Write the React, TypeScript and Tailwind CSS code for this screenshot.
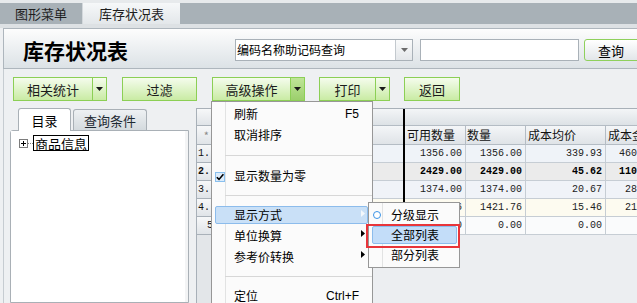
import React from "react";

const cjk = "font-['Noto_Sans_CJK_SC','Noto_Sans',sans-serif]";
const mono = "font-['Liberation_Mono','DejaVu_Sans_Mono',monospace]";

function DownArrow({ color = "#1a1a1a" }: { color?: string }) {
  return (
    <svg width="7" height="4" viewBox="0 0 7 4">
      <path d="M0 0H7L3.5 4Z" fill={color} />
    </svg>
  );
}

function RightArrow({ color = "#000" }: { color?: string }) {
  return (
    <svg width="4" height="7" viewBox="0 0 4 7">
      <path d="M0 0L4 3.5L0 7Z" fill={color} />
    </svg>
  );
}

function ToolButton({
  label,
  width,
  arrow,
  pressed,
}: {
  label: string;
  width: string;
  arrow?: boolean;
  pressed?: boolean;
}) {
  return (
    <div
      className={`flex h-[24px] shrink-0 ${width} border border-[#8ccf55] bg-linear-to-b from-[#f5fced] to-[#c9eba3] text-[13px] leading-none text-[#1b1b1b]`}
    >
      <div className="flex flex-1 items-center justify-center">{label}</div>
      {arrow && (
        <div
          className={`flex w-[14px] items-center justify-center border-l border-[#8ccf55] ${
            pressed ? "bg-linear-to-b from-[#bfe598] to-[#9ccf6c]" : ""
          }`}
        >
          <DownArrow />
        </div>
      )}
    </div>
  );
}

type Row = { bg: string; n: string; pad: string; v: string[]; bold?: boolean };

const rows: Row[] = [
  { bg: "bg-[#eff3f8]", n: "1.", pad: "pl-[1px]", v: ["1356.00", "1356.00", "339.93", "460945.08"] },
  { bg: "bg-[#ebebeb]", n: "2.", pad: "pl-[1px]", v: ["2429.00", "2429.00", "45.62", "110810.98"], bold: true },
  { bg: "bg-[#f0f3f8]", n: "3.", pad: "pl-[1px]", v: ["1374.00", "1374.00", "20.67", "28400.58"] },
  { bg: "bg-[#fdfbf0]", n: "4.", pad: "pl-[1px]", v: ["1421.76", "1421.76", "15.46", "21980.41"] },
  { bg: "bg-[#fafbfc]", n: "5", pad: "pl-[10px]", v: ["0.00", "0.00", "0.00", "0.00"] },
];

const rnCell =
  "w-[15px] shrink-0 border-r border-b border-[#a9b1b9] bg-linear-to-b from-[#f7f8f9] to-[#e0e4e8]";

function Grid() {
  return (
    <div className="ml-[7px] flex min-w-0 flex-1 flex-col overflow-hidden border-l border-t border-[#a8b0b8] bg-[#eceef1]">
      {/* group header */}
      <div className="flex h-[17px] shrink-0">
        <div className={rnCell} />
        <div className="w-[191px] shrink-0 border-b border-[#b4bcc4] bg-linear-to-b from-[#f3f5f7] to-[#dde2e6]" />
        <div className="w-[2px] shrink-0 bg-black" />
        <div className="w-[400px] shrink-0 border-b border-[#b4bcc4] bg-linear-to-b from-[#f3f5f7] to-[#dde2e6]" />
      </div>
      {/* column header */}
      <div className="flex h-[19px] shrink-0 text-[12px] leading-none text-[#111]">
        <div className={`${rnCell} flex items-center justify-end pr-[2px] text-[11px] text-[#8a8a8a]`}>*</div>
        <div className="w-[191px] shrink-0 border-b border-[#b4bcc4] bg-linear-to-b from-[#f4f6f8] to-[#dfe3e7]" />
        <div className="w-[2px] shrink-0 bg-black" />
        <div className="flex w-[61px] shrink-0 items-center border-r border-b border-[#b4bcc4] bg-linear-to-b from-[#f4f6f8] to-[#dfe3e7] pl-[2px]">
          可用数量
        </div>
        <div className="flex w-[60px] shrink-0 items-center border-r border-b border-[#b4bcc4] bg-linear-to-b from-[#f4f6f8] to-[#dfe3e7] pl-[1px]">
          数量
        </div>
        <div className="flex w-[80px] shrink-0 items-center border-r border-b border-[#b4bcc4] bg-linear-to-b from-[#f4f6f8] to-[#dfe3e7] pl-[2px]">
          成本均价
        </div>
        <div className="flex w-[70px] shrink-0 items-center border-b border-[#b4bcc4] bg-linear-to-b from-[#f4f6f8] to-[#dfe3e7] pl-[2px]">
          成本金额
        </div>
      </div>
      {rows.map((r) => (
        <div
          key={r.n}
          className={`flex h-[18px] shrink-0 ${mono} text-[10px] leading-none ${
            r.bold ? "font-bold text-black" : "text-[#222]"
          }`}
        >
          <div className={`${rnCell} flex items-center ${r.pad} text-[#111]`}>{r.n}</div>
          <div className={`w-[191px] shrink-0 border-b border-[#c6cdd4] ${r.bg}`} />
          <div className="w-[2px] shrink-0 bg-black" />
          <div className={`flex w-[61px] shrink-0 items-center justify-end border-r border-b border-[#c6cdd4] pr-[3px] ${r.bg}`}>
            {r.v[0]}
          </div>
          <div className={`flex w-[60px] shrink-0 items-center justify-end border-r border-b border-[#c6cdd4] pr-[3px] ${r.bg}`}>
            {r.v[1]}
          </div>
          <div className={`flex w-[80px] shrink-0 items-center justify-end border-r border-b border-[#c6cdd4] pr-[3px] ${r.bg}`}>
            {r.v[2]}
          </div>
          <div className={`flex w-[70px] shrink-0 items-center justify-end border-b border-[#c6cdd4] pr-[3px] ${r.bg}`}>
            {r.v[3]}
          </div>
        </div>
      ))}
      <div className="flex flex-1">
        <div className="w-[15px] shrink-0 border-r border-[#b4bcc4] bg-[#e3e6e9]" />
      </div>
    </div>
  );
}

function LeftPanel() {
  return (
    <div className="ml-[6px] flex w-[179px] shrink-0 flex-col">
      <div className="flex h-[22px] shrink-0 items-end pl-[8px] text-[13px] leading-none">
        <div className="relative z-10 -mb-px flex h-[23px] w-[53px] items-center justify-center rounded-t-[3px] border border-b-0 border-[#a9b0b6] bg-white">
          目录
        </div>
        <div className="ml-[2px] flex h-[21px] w-[74px] items-center justify-center rounded-t-[3px] border border-b-0 border-[#a9b0b6] bg-linear-to-b from-[#eef1f3] to-[#d4dade] text-[#1e2a33]">
          查询条件
        </div>
      </div>
      <div className="flex flex-1 rounded-tl-[3px] border border-[#a9b0b6] bg-[#f3f4f5] pr-[3px]">
        <div className="flex-1 bg-white pl-[8px] pt-[4px]">
          <div className="flex h-[16px] items-center">
            <svg width="9" height="9" viewBox="0 0 9 9">
              <rect x="0.5" y="0.5" width="8" height="8" fill="#fff" stroke="#7c7c7c" />
              <path d="M2 4.5H7M4.5 2V7" stroke="#000" />
            </svg>
            <div className="w-[5px] border-t border-dotted border-[#808080]" />
            <div className="flex h-[16px] items-center border border-black px-[1px] text-[13px] leading-none">
              商品信息
            </div>
          </div>
        </div>
      </div>
    </div>
  );
}

function MenuItem({
  h,
  label,
  shortcut,
  arrow,
  active,
  check,
}: {
  h: string;
  label: string;
  shortcut?: string;
  arrow?: boolean;
  active?: boolean;
  check?: boolean;
}) {
  return (
    <div className={`relative flex ${h} items-center pl-[22px]`}>
      {active && (
        <div className="absolute left-[3px] right-[4px] top-[1px] bottom-[1px] rounded-[2px] border border-[#8cbcec] bg-[#c9e0f7]" />
      )}
      {check && (
        <svg className="absolute left-[3px] top-[6px]" width="10" height="10" viewBox="0 0 10 10">
          <rect x="0.5" y="0.5" width="9" height="9" fill="#dcecfb" stroke="#8ac0ee" />
          <path d="M1.8 5.2L4 7.4L8.4 2.2" fill="none" stroke="#000" strokeWidth="1.6" />
        </svg>
      )}
      <span className="relative">{label}</span>
      {shortcut && <span className="absolute right-[13px] font-['Liberation_Sans',sans-serif]">{shortcut}</span>}
      {arrow && (
        <span className="absolute right-[7px] top-[5px] flex">
          <RightArrow color={active ? "#f4f8fc" : "#000"} />
        </span>
      )}
    </div>
  );
}

function Separator({ h, top }: { h: string; top: string }) {
  return (
    <div className={`relative ${h}`}>
      <div className={`absolute left-[13px] right-0 ${top} h-px bg-[#d7d7d7]`} />
    </div>
  );
}

function Menu() {
  return (
    <div className="absolute left-[211px] top-[101px] h-[212px] w-[162px] border border-[#979797] bg-[#fbfbfb] text-[12px] leading-none text-black">
      <div className="absolute left-[13px] top-0 bottom-0 w-px bg-[#e2e3e3]" />
      <div className="pt-[2px]">
        <MenuItem h="h-[20px]" label="刷新" shortcut="F5" />
        <MenuItem h="h-[21px]" label="取消排序" />
        <Separator h="h-[21px]" top="top-[10px]" />
        <MenuItem h="h-[20px]" label="显示数量为零" check />
        <Separator h="h-[19px]" top="top-[9px]" />
        <MenuItem h="h-[20px]" label="显示方式" arrow active />
        <MenuItem h="h-[21px]" label="单位换算" arrow />
        <MenuItem h="h-[21px]" label="参考价转换" arrow />
        <Separator h="h-[19px]" top="top-[9px]" />
        <MenuItem h="h-[20px]" label="定位" shortcut="Ctrl+F" />
      </div>
    </div>
  );
}

function SubMenu() {
  return (
    <div className="absolute left-[368px] top-[202px] h-[66px] w-[92px] border border-[#979797] bg-[#fbfbfb] pt-[2px] text-[12px] leading-none text-black">
      <div className="absolute left-[13px] top-0 bottom-0 w-px bg-[#e2e3e3]" />
      <div className="relative flex h-[20px] items-center pl-[22px]">
        <div className="absolute left-[4px] top-[6px] h-[8px] w-[8px] rounded-full border border-[#3b93e6] bg-white" />
        <span>分级显示</span>
      </div>
      <div className="relative flex h-[20px] items-center pl-[22px]">
        <div className="absolute left-[3px] right-[2px] top-[1px] bottom-[1px] rounded-[2px] border border-[#8cbcec] bg-[#c3ddf9]" />
        <span className="relative">全部列表</span>
      </div>
      <div className="relative flex h-[20px] items-center pl-[22px]">
        <span>部分列表</span>
      </div>
    </div>
  );
}

export default function App() {
  return (
    <div className={`relative flex h-[303px] w-[637px] flex-col overflow-hidden bg-[#eef0f2] ${cjk} text-black`}>
      {/* window tabs */}
      <div className="shrink-0 bg-[#e7eaec] pt-[3px]">
        <div className="flex h-[21px] bg-[#a8b1b7] text-[13px] leading-none text-[#1e1e1e]">
          <div className="flex w-[83px] items-center justify-center border-r border-[#d3d8dc]">图形菜单</div>
          <div className="flex w-[97px] items-center justify-center bg-linear-to-b from-[#f6f8f9] to-[#e3e7ea]">
            库存状况表
          </div>
        </div>
      </div>
      <div className="h-[4px] shrink-0 bg-[#dde1e4]" />

      {/* header */}
      <div className="ml-[3px] flex h-[41px] shrink-0 items-center border-y border-l border-[#aeb6bd] bg-linear-to-b from-[#fdfdfd] to-[#dce2e6] pt-[3px]">
        <div className="w-[231px] shrink-0 pl-[19px] text-[21px] font-bold leading-none">库存状况表</div>
        <div className="flex h-[22px] w-[178px] shrink-0 border border-[#a9b1b8] bg-white">
          <div className="flex flex-1 items-center pl-[1px] text-[12px] leading-none">编码名称助记码查询</div>
          <div className="flex w-[17px] items-center justify-center border-l border-[#c3c9ce] bg-linear-to-b from-[#fafbfb] to-[#e4e7ea]">
            <DownArrow color="#6b6b6b" />
          </div>
        </div>
        <div className="ml-[7px] h-[22px] w-[159px] shrink-0 border border-[#a9b1b8] bg-white" />
        <div className="ml-[5px] flex h-[22px] w-[62px] shrink-0 items-center rounded-[3px] border border-[#8fd05c] bg-linear-to-b from-[#ffffff] to-[#e2e6e9] pl-[13px] text-[13px] leading-none">
          查询
        </div>
      </div>

      {/* body */}
      <div className="ml-[3px] flex min-h-0 flex-1 flex-col border-l border-[#c6ccd1]">
        <div className="flex shrink-0 pl-[9px] pt-[8px]">
          <ToolButton label="相关统计" width="w-[94px]" arrow />
          <div className="ml-[15px]">
            <ToolButton label="过滤" width="w-[75px]" />
          </div>
          <div className="ml-[15px]">
            <ToolButton label="高级操作" width="w-[93px]" arrow pressed />
          </div>
          <div className="ml-[14px]">
            <ToolButton label="打印" width="w-[71px]" arrow />
          </div>
          <div className="ml-[14px]">
            <ToolButton label="返回" width="w-[56px]" />
          </div>
        </div>
        <div className="mt-[7px] flex min-h-0 flex-1">
          <LeftPanel />
          <Grid />
        </div>
      </div>

      <Menu />
      <SubMenu />
      <div className="absolute left-[366px] top-[224px] h-[24px] w-[94px] border-2 border-[#e8353a]" />
    </div>
  );
}
